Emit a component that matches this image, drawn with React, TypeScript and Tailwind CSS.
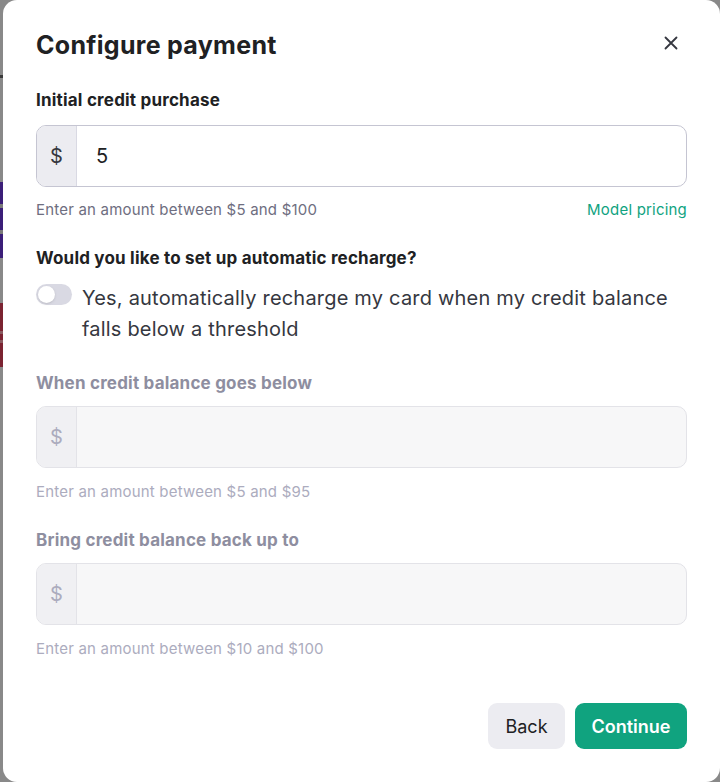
import { useState } from 'react';

function DollarInput({ value, disabled }: { value?: string; disabled?: boolean }) {
  return (
    <div
      className={`flex h-[62px] rounded-[10px] border overflow-hidden ${
        disabled ? 'border-[#e3e3e8] bg-[#f7f7f8]' : 'border-[#c5c5d2] bg-white'
      }`}
    >
      <div
        className={`w-[40px] flex items-center justify-center border-r text-[20px] ${
          disabled ? 'bg-[#f0f0f3] border-[#e3e3e8] text-[#acacbe]' : 'bg-[#ececf1] border-[#d9d9e3] text-[#353740]'
        }`}
      >
        $
      </div>
      <input
        defaultValue={value}
        disabled={disabled}
        className="flex-1 bg-transparent px-[19px] text-[20px] text-[#202123] outline-none"
      />
    </div>
  );
}

export default function App() {
  const [auto, setAuto] = useState(false);

  return (
    <div className="w-[720px] h-[782px] flex bg-[#898989] font-['Inter','Noto_Sans',sans-serif] overflow-hidden">
      {/* backdrop sliver */}
      <div className="w-[3px] flex-shrink-0 flex flex-col">
        <div className="h-[75px]" />
        <div className="h-[3px] bg-[#3a3a3a]" />
        <div className="h-[104px]" />
        <div className="h-[22px] bg-[#3b1e78]" />
        <div className="h-[4px] bg-[#7a7a7a]" />
        <div className="h-[22px] bg-[#3b1e78]" />
        <div className="h-[4px] bg-[#7a7a7a]" />
        <div className="h-[24px] bg-[#3b1e78]" />
        <div className="h-[45px]" />
        <div className="h-[28px] bg-[#7b2331]" />
        <div className="h-[3px] bg-[#8a5a60]" />
        <div className="h-[6px] bg-[#7b2331]" />
        <div className="h-[3px] bg-[#8a5a60]" />
        <div className="h-[24px] bg-[#7b2331]" />
      </div>

      {/* Modal */}
      <div className="flex-1 bg-white rounded-[14px] px-[33px] pt-[29px] flex flex-col text-[#202123]">
        <div className="flex items-center justify-between">
          <h1 className="text-[25px] leading-[32px] font-bold tracking-[0.3px]">Configure payment</h1>
          <button className="w-[24px] h-[24px] flex items-center justify-center text-[#353740] mr-[4px] -mt-[4px]">
            <svg viewBox="0 0 24 24" fill="none" stroke="currentColor" strokeWidth={2} className="w-[22px] h-[22px]">
              <path strokeLinecap="round" d="M6 6l12 12M18 6L6 18" />
            </svg>
          </button>
        </div>

        <label className="mt-[27px] text-[17px] leading-[24px] font-bold tracking-[0.2px]">Initial credit purchase</label>
        <div className="mt-[13px]">
          <DollarInput value="5" />
        </div>
        <div className="mt-[13px] flex justify-between text-[15px] leading-[20px] tracking-[0.2px]">
          <span className="text-[#6e6e80]">Enter an amount between $5 and $100</span>
          <a className="text-[#10a37f]">Model pricing</a>
        </div>

        <p className="mt-[26px] text-[17px] leading-[24px] font-bold tracking-[0.2px]">Would you like to set up automatic recharge?</p>
        <div className="mt-[13px] flex items-start gap-[10px]">
          <button
            onClick={() => setAuto(!auto)}
            className={`mt-[1px] w-[36px] h-[21px] rounded-full flex-shrink-0 p-[2px] flex ${
              auto ? 'bg-[#10a37f] justify-end' : 'bg-[#d9d9e3] justify-start'
            }`}
          >
            <span className="w-[17px] h-[17px] rounded-full bg-white shadow-sm" />
          </button>
          <span className="text-[20px] leading-[31px] text-[#353740] tracking-[0.2px]">
            Yes, automatically recharge my card when my credit balance falls below a threshold
          </span>
        </div>

        <label className="mt-[26px] text-[17px] leading-[24px] font-bold tracking-[0.2px] text-[#8e8ea0]">When credit balance goes below</label>
        <div className="mt-[11px]">
          <DollarInput disabled={!auto} />
        </div>
        <p className="mt-[14px] text-[15px] leading-[20px] tracking-[0.2px] text-[#acacbe]">Enter an amount between $5 and $95</p>

        <label className="mt-[26px] text-[17px] leading-[24px] font-bold tracking-[0.2px] text-[#8e8ea0]">Bring credit balance back up to</label>
        <div className="mt-[11px]">
          <DollarInput disabled={!auto} />
        </div>
        <p className="mt-[14px] text-[15px] leading-[20px] tracking-[0.2px] text-[#acacbe]">Enter an amount between $10 and $100</p>

        <div className="mt-[44px] flex justify-end gap-[10px]">
          <button className="h-[46px] w-[77px] rounded-[9px] bg-[#ececf1] text-[18px] text-[#202123]">Back</button>
          <button className="h-[46px] w-[112px] rounded-[9px] bg-[#10a37f] text-[18px] font-semibold text-white">Continue</button>
        </div>
      </div>
    </div>
  );
}
